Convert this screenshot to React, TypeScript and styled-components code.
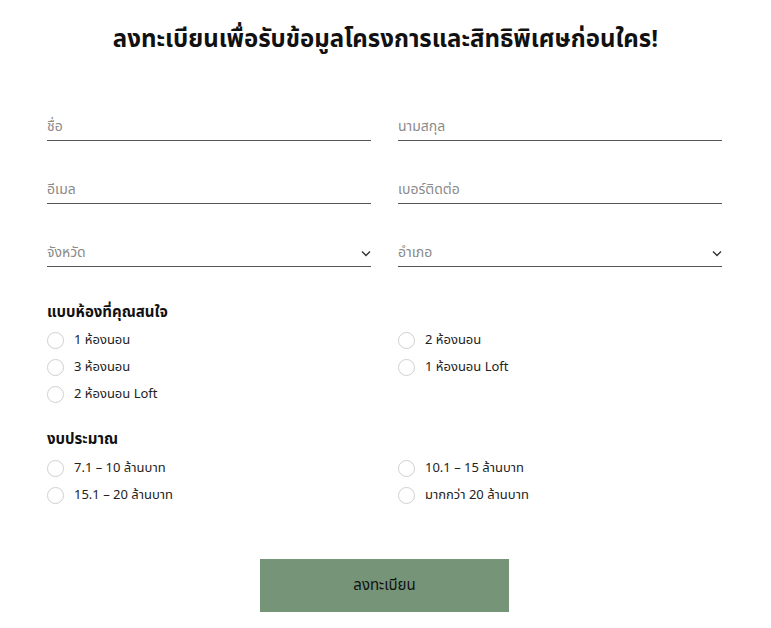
import React from "react";
import styled, { createGlobalStyle } from "styled-components";

const Global = createGlobalStyle`
  html, body { margin: 0; padding: 0; background: #fff; }
  body { font-family: "Noto Sans Thai", "Noto Sans", "Liberation Sans", sans-serif; color: #1d1d1d; }
  * { box-sizing: border-box; }
`;

const Page = styled.div`
  width: 771px;
  padding: 24px 0 0;
  display: flex;
  flex-direction: column;
  align-items: center;
`;

const Title = styled.h1`
  margin: 0;
  font-size: 24px;
  font-weight: 700;
  line-height: 32px;
  color: #111;
  text-align: center;
`;

const Form = styled.form`
  width: 675px;
  margin: 44px 0 0 -2px;
  display: flex;
  flex-direction: column;
`;

const FieldGrid = styled.div`
  display: grid;
  grid-template-columns: 1fr 1fr;
  column-gap: 27px;
  row-gap: 22px;
`;

const Field = styled.label`
  position: relative;
  display: flex;
  align-items: center;
  height: 41px;
  border-bottom: 1px solid #555;
  font-size: 14px;
  color: #8a8a8a;
  padding-top: 12px;
`;

const Chevron = styled.svg`
  position: absolute;
  right: 0;
  top: 24px;
`;

const Section = styled.div<{ $gap: number }>`
  margin-top: ${(p) => p.$gap}px;
  display: flex;
  flex-direction: column;
`;

const SectionTitle = styled.div<{ $after: number }>`
  font-size: 15px;
  font-weight: 700;
  color: #111;
  line-height: 22px;
  margin-bottom: ${(p) => p.$after}px;
`;

const RadioGrid = styled.div`
  display: grid;
  grid-template-columns: 1fr 1fr;
  column-gap: 27px;
  row-gap: 7px;
`;

const RadioRow = styled.div`
  display: flex;
  align-items: center;
  height: 20px;
  gap: 10px;
  font-size: 13px;
  color: #222;
`;

const Circle = styled.span`
  width: 17px;
  height: 17px;
  border-radius: 50%;
  border: 1px solid #cfcfcf;
  flex: none;
`;

const ButtonWrap = styled.div`
  display: flex;
  justify-content: center;
  margin-top: 54px;
`;

const Submit = styled.button`
  width: 249px;
  height: 53px;
  border: none;
  background: #759478;
  color: #111;
  font-family: inherit;
  font-size: 15px;
  cursor: pointer;
`;

const Select = ({ label }: { label: string }) => (
  <Field>
    {label}
    <Chevron width="10" height="7" viewBox="0 0 10 7">
      <path d="M1 1.5 L5 5.5 L9 1.5" fill="none" stroke="#333" strokeWidth="1.4" />
    </Chevron>
  </Field>
);

const Radio = ({ label }: { label: string }) => (
  <RadioRow>
    <Circle />
    {label}
  </RadioRow>
);

export default function App() {
  return (
    <Page>
      <Global />
      <Title>ลงทะเบียนเพื่อรับข้อมูลโครงการและสิทธิพิเศษก่อนใคร!</Title>
      <Form>
        <FieldGrid>
          <Field>ชื่อ</Field>
          <Field>นามสกุล</Field>
          <Field>อีเมล</Field>
          <Field>เบอร์ติดต่อ</Field>
          <Select label="จังหวัด" />
          <Select label="อำเภอ" />
        </FieldGrid>
        <Section $gap={35}>
          <SectionTitle $after={6}>แบบห้องที่คุณสนใจ</SectionTitle>
          <RadioGrid>
            <Radio label="1 ห้องนอน" />
            <Radio label="2 ห้องนอน" />
            <Radio label="3 ห้องนอน" />
            <Radio label="1 ห้องนอน Loft" />
            <Radio label="2 ห้องนอน Loft" />
          </RadioGrid>
        </Section>
        <Section $gap={25}>
          <SectionTitle $after={7}>งบประมาณ</SectionTitle>
          <RadioGrid>
            <Radio label="7.1 – 10 ล้านบาท" />
            <Radio label="10.1 – 15 ล้านบาท" />
            <Radio label="15.1 – 20 ล้านบาท" />
            <Radio label="มากกว่า 20 ล้านบาท" />
          </RadioGrid>
        </Section>
        <ButtonWrap>
          <Submit type="button">ลงทะเบียน</Submit>
        </ButtonWrap>
      </Form>
    </Page>
  );
}
